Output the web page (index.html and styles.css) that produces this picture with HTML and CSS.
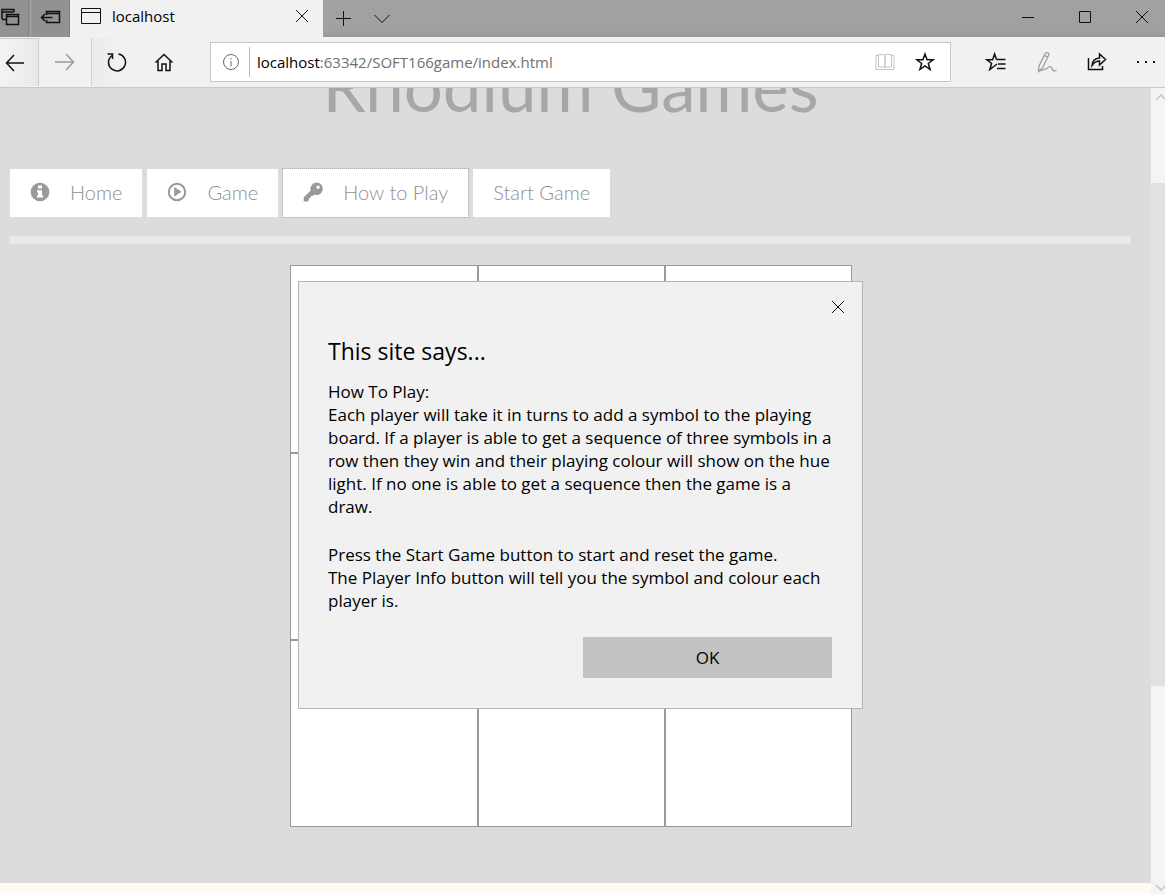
FILE: index.html
```html
<!DOCTYPE html>
<html lang="en">
<head>
<meta charset="utf-8">
<title>localhost</title>
<link rel="stylesheet" href="styles.css">
</head>
<body>
<div class="window">
  <header class="titlebar">
    <button class="tab-tool" aria-label="Tabs you've set aside">
      <svg width="20" height="20" viewBox="0 0 20 20"><path d="M2 12V2.500h12V5M2 5h12M2 12.500h4M6.500 7.500h12v10h-12zM6.500 9.500h12"/></svg>
    </button>
    <button class="tab-tool second" aria-label="Set these tabs aside">
      <svg width="22" height="20" viewBox="0 0 22 20"><path d="M6.500 8V4.500h13v11h-13V13M6.500 6.500h13M1.500 10.500h11M5 7l-3.500 3.500L5 14"/></svg>
    </button>
    <div class="tab">
      <svg width="22" height="18" viewBox="0 0 22 18"><path class="thin" d="M1.500 1.500h19v15h-19zM1.500 5.500h19"/></svg>
      <span class="tab-title">localhost</span>
      <button class="plain" aria-label="Close tab"><svg width="14" height="14" viewBox="0 0 14 14"><path class="thin" d="M1 1l12 12M13 1L1 13"/></svg></button>
    </div>
    <button class="plain new-tab" aria-label="New tab"><svg width="17" height="17" viewBox="0 0 17 17"><path class="thin" d="M8.500 1v15M1 8.500h15"/></svg></button>
    <button class="plain" aria-label="Show tab previews"><svg width="18" height="10" viewBox="0 0 18 10"><path class="thin" d="M1.500 1L9 8.500L16.500 1"/></svg></button>
    <div class="window-controls">
      <button class="plain" aria-label="Minimize"><svg width="12" height="12" viewBox="0 0 12 12"><path class="thin" d="M0 6.500h12"/></svg></button>
      <button class="plain" aria-label="Maximize"><svg width="12" height="12" viewBox="0 0 12 12"><path class="thin" d="M.5.5h11v11H.5z"/></svg></button>
      <button class="plain" aria-label="Close window"><svg width="12" height="12" viewBox="0 0 12 12"><path class="thin" d="M0 0l12 12M12 0L0 12"/></svg></button>
    </div>
  </header>

  <div class="toolbar">
    <button class="nav back" aria-label="Back"><svg width="20" height="18" viewBox="0 0 20 18"><path d="M1.500 9H19M9 1L1.500 9L9 17"/></svg></button>
    <button class="nav forward" aria-label="Forward" disabled><svg width="20" height="18" viewBox="0 0 20 18"><path d="M0 9h18.500M11 1l7.500 8L11 17"/></svg></button>
    <button class="nav refresh" aria-label="Refresh"><svg width="22" height="22" viewBox="0 0 22 22"><path d="M7 4.500A8.500 8.500 0 1 0 13.500 3M2.500 3h5v5"/></svg></button>
    <button class="nav" aria-label="Home"><svg width="20" height="20" viewBox="0 0 20 20"><path class="medium" d="M1.500 10.500L10 2.500l8.500 8M4 9v9.500h4V12h4v6.500h4V9"/></svg></button>
    <div class="address">
      <button class="plain site-info" aria-label="Site information"><svg width="18" height="18" viewBox="0 0 18 18"><circle cx="9" cy="9" r="7.500"/><path d="M9 8v5.500M9 5v1.500"/></svg></button>
      <a class="url" href="#board"><span class="host">localhost</span><span>:63342/SOFT166game/index.html</span></a>
      <button class="plain reading" aria-label="Reading view"><svg width="20" height="20" viewBox="0 0 20 20"><path class="thin" d="M3.500 3.500H1v14h18v-14h-2.500M3.500 2.500h5q1.500 0 1.500 1v12.500q0-1-1.500-1H3.500zM16.500 2.500h-5q-1.500 0-1.500 1v12.500q0-1 1.500-1h5z"/></svg></button>
      <button class="plain" aria-label="Add to favourites"><svg width="20" height="20" viewBox="0 0 20 20"><path class="medium" d="M10 2l2.100 5.800h6l-4.800 3.700 1.800 6L10 14l-5.100 3.500 1.800-6L1.900 7.800h6z"/></svg></button>
    </div>
    <div class="tools">
      <button class="plain" aria-label="Favourites"><svg width="22" height="20" viewBox="0 0 22 20"><path class="medium" d="M11.500 7.500H20.500M13 12h7.500M12 16.500h8.500M11.500 7.500L9.600 2L7.600 7.800H2l4.600 3.700-1.800 6 4.700-3.500M9.500 14l2.500-2"/></svg></button>
      <button class="plain pen" aria-label="Add notes"><svg width="22" height="22" viewBox="0 0 22 22"><path d="M3 15L9 3q1-2 2.700-1.200t.8 2.700L6.500 17 2.500 20.500zM8.500 4.500l3 1.500M2 20.500l9-3q4-4 5 0t4.500 1.500"/></svg></button>
      <button class="plain" aria-label="Share"><svg width="20" height="20" viewBox="0 0 20 20"><path class="medium" d="M1.500 6v11.500h14V14M5 13.500Q5.500 6.500 12.500 6V2l6 5.500-6 5.500v-4Q8 9 5 13.500z"/></svg></button>
      <button class="plain" aria-label="Settings and more"><svg width="20" height="4" viewBox="0 0 20 4"><path class="dots" d="M1 1h2v2H1zM9 1h2v2H9zM17 1h2v2h-2z"/></svg></button>
    </div>
  </div>

  <div class="viewport">
    <div class="document">
      <div class="page">
        <div class="banner"><h1>Rhodium Games</h1></div>
        <nav class="menu">
          <button class="menu-item"><svg width="20" height="20" viewBox="0 0 20 20"><circle cx="10" cy="10" r="9.300"/><path class="hole" d="M8 3.500h4v3H8zM7 8.200h5v5.200h1.200v2.100H6.800v-2.100H8v-3H7z"/></svg>Home</button>
          <button class="menu-item"><svg width="20" height="20" viewBox="0 0 20 20"><circle class="ring" cx="10" cy="10" r="8.200"/><path d="M7.200 5l7.300 4.800-7.300 4.900z"/></svg>Game</button>
          <button class="menu-item focused"><svg width="20" height="20" viewBox="0 0 20 20"><path fill-rule="evenodd" d="M13.500 0.500a6.300 6.300 0 0 1 0 12.600q-1.400 0-2.400-.5L9.600 14H7.800v2H5.900v2l-1.200 1.400H.7v-4.200l7-6.800A6.300 6.300 0 0 1 13.500.5zm1.600 3a1.700 1.700 0 1 0 0 3.400 1.700 1.700 0 0 0 0-3.400z"/></svg>How to Play</button>
          <button class="menu-item">Start Game</button>
        </nav>
        <div class="rule"></div>
        <div class="board" id="board">
          <div class="cell"></div><div class="cell"></div><div class="cell"></div>
          <div class="cell"></div><div class="cell"></div><div class="cell"></div>
          <div class="cell"></div><div class="cell"></div><div class="cell"></div>
        </div>
      </div>
      <div class="page-end"></div>
    </div>
    <div class="scrollbar">
      <svg width="14" height="18" viewBox="0 0 14 18"><path d="M5 12l5-5 5 5"/></svg>
      <div class="thumb"></div>
      <svg width="14" height="14" viewBox="0 0 14 14"><path d="M5 5l5 5 5-5"/></svg>
    </div>

    <div class="overlay">
      <section class="dialog" role="dialog" aria-labelledby="dialog-title">
        <button class="plain dialog-close" aria-label="Close"><svg width="14" height="14" viewBox="0 0 14 14"><path class="thin" d="M1 1l12 12M13 1L1 13"/></svg></button>
        <h2 id="dialog-title">This site says...</h2>
        <p>How To Play:<br>Each player will take it in turns to add a symbol to the playing<br>board. If a player is able to get a sequence of three symbols in a<br>row then they win and their playing colour will show on the hue<br>light. If no one is able to get a sequence then the game is a<br>draw.</p>
        <p>Press the Start Game button to start and reset the game.<br>The Player Info button will tell you the symbol and colour each<br>player is.</p>
        <button class="ok">OK</button>
      </section>
    </div>
  </div>
</div>
</body>
</html>
```
FILE: styles.css
```css
* { box-sizing: border-box; }
body {
  margin: 0;
  font-family: "Open Sans", "Noto Sans", sans-serif;
  color: #000;
}
button { font: inherit; color: inherit; border: 0; margin: 0; padding: 0; background: none; }
svg { display: block; flex: none; fill: none; stroke: #111; stroke-width: 1.5; }
.thin { stroke-width: 1; }
.medium { stroke-width: 1.5; }
.dots { fill: #111; stroke: none; }
.plain { display: flex; align-items: center; justify-content: center; }

.window { display: flex; flex-direction: column; height: 100vh; overflow: hidden; background: #f1f1f1; }

.titlebar { display: flex; align-items: center; height: 37px; flex: none; background: linear-gradient(#9fa1a2 80%, #98999a); }
.tab-tool { display: flex; align-items: center; height: 37px; width: 29px; padding-bottom: 4px; background: #919393; border-right: 1px solid #7f8181; }
.tab-tool.second { width: 41px; justify-content: center; border-left: 3px solid #989a9a; }
.tab { display: flex; align-items: center; align-self: stretch; width: 253px; padding: 0 14px 5px 10px; background: #f1f1f1; }
.tab-title { flex: 1; padding-left: 10px; font-size: 15px; }
.new-tab { margin: 0 21px 0 12px; }
.window-controls { display: flex; gap: 45px; margin-left: auto; padding: 0 17px 4px 0; }

.toolbar { display: flex; align-items: center; height: 51px; flex: none; border-bottom: 1px solid #c8c8c8; background: #f1f1f1; }
.nav { display: flex; align-items: center; justify-content: center; height: 48px; width: 50px; }
.nav.back { width: 39px; justify-content: flex-start; padding-left: 5px; border: solid #ccc; border-width: 1px 1px 0 0; background: linear-gradient(90deg, #f3f3f3, #e9e9e9); }
.nav.forward { width: 52px; }
.nav.forward svg { stroke: #999; }
.nav.refresh { width: 48px; border-left: 1px solid #d4d4d4; background: linear-gradient(90deg, #ebebeb, #f1f1f1 60%); }
.address { display: flex; align-items: center; flex: 1; height: 40px; margin-left: 21px; padding: 0 15px 0 11px; border: 1px solid #c6c6c6; background: #fff; }
.site-info { height: 30px; padding-right: 9px; border-right: 1px solid #bbb; }
.site-info svg { stroke: #666; stroke-width: 1; }
.url { display: flex; flex: 1; padding-left: 7px; font-size: 15px; color: #707070; text-decoration: none; }
.host { color: #000; }
.reading { margin-right: 20px; }
.reading svg { stroke: #c4c4c4; }
.tools { display: flex; align-items: center; gap: 29px; padding: 0 9px 0 34px; }
.pen svg { stroke: #999; stroke-width: 1.2; }

.viewport { position: relative; display: flex; flex: 1; min-height: 0; }
.document { display: flex; flex-direction: column; flex: 1; background: #fffaf2; }
.page { flex: 1; padding: 0 20px 0 10px; background: #dcdcdc; }
.page-end { height: 11px; }
.banner { display: flex; align-items: flex-end; justify-content: center; height: 48px; overflow: hidden; }
.banner h1 { margin: 0; font: 400 69px/100px Lato, sans-serif; color: #a5a8a9; white-space: nowrap; }
.menu { display: flex; gap: 5px; margin-top: 33px; }
.menu-item { display: flex; align-items: center; gap: 20px; height: 48px; padding: 0 20px 2px; background: #fff; color: #8f8f8f; font: 300 20px Lato, sans-serif; white-space: nowrap; }
.menu-item svg { fill: #999; stroke: none; }
.menu-item .hole { fill: #fff; }
.menu-item .ring { fill: none; stroke: #999; stroke-width: 2; }
.focused { outline: 1px dotted #aaa; }
.rule { height: 8px; margin: 19px 0 21px; background: #e9e9e9; }
.board { display: grid; grid-template: 186px 185px 185px / 186px 185px 185px; gap: 2px; width: 562px; margin: 0 auto; border: 1px solid #999; background: #999; }
.cell { background: #fff; }

.scrollbar { display: flex; flex-direction: column; width: 14px; background: #f4f4f4; }
.scrollbar svg { stroke: #c4c4c4; }
.thumb { flex: 0 0 503px; margin-top: 77px; margin-bottom: auto; background: #e1e1e1; }

.overlay { position: absolute; inset: 0; display: flex; align-items: flex-start; justify-content: center; padding: 193px 4px 0 0; }
.dialog { display: flex; flex-direction: column; width: 565px; padding: 18px 30px 30px 29px; border: 1px solid #b5b5b5; background: #f1f1f1; font-size: 17px; line-height: 23px; }
.dialog-close { align-self: flex-end; width: 14px; height: 14px; margin-right: -13px; }
.dialog h2 { margin: 19px 0 11px; font-size: 23px; font-weight: 400; line-height: 36px; }
.dialog p { margin: 0 0 25px; white-space: nowrap; }
.ok { align-self: flex-end; width: 249px; height: 41px; background: #c2c2c2; }
```
